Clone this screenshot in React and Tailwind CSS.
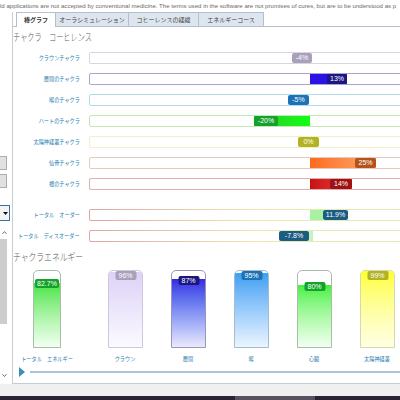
import React from "react";

const JP = { fontFamily: '"Noto Sans CJK JP", "Noto Sans", sans-serif' };

const rows = [
  { label: "クラウンチャクラ", border: "border-[#d8d4e4]", lab: { l: 202, w: 20, t: "-4%", bg: "bg-[#a9a1ba]" } },
  { label: "層間のチャクラ", border: "border-[#aaa2cf]", fill: { l: 220, w: 37, c: "bg-[#2c12e6]" }, lab: { l: 237, w: 20, t: "13%", bg: "bg-[#1c1680]" } },
  { label: "喉のチャクラ", border: "border-[#b0dbee]", lab: { l: 198, w: 21, t: "-5%", bg: "bg-[#1c72b6]" } },
  { label: "ハートのチャクラ", border: "border-[#c2e9b4]", fill: { l: 164, w: 56, c: "bg-gradient-to-r from-[#28c828] to-[#10ff10]" }, lab: { l: 164, w: 24, t: "-20%", bg: "bg-[#14a22a]" } },
  { label: "太陽神経叢チャクラ", border: "border-[#f0f0c4]", lab: { l: 208, w: 21, t: "0%", bg: "bg-[#b2b222]" } },
  { label: "仙骨チャクラ", border: "border-[#e8c8ba]", fill: { l: 220, w: 66, c: "bg-gradient-to-r from-[#ff6a18] to-[#f7a86a]" }, lab: { l: 265, w: 21, t: "25%", bg: "bg-[#b4541a]" } },
  { label: "根のチャクラ", border: "border-[#dab0b0]", fill: { l: 220, w: 42, c: "bg-gradient-to-r from-[#cc1010] to-[#e23a3a]" }, lab: { l: 240, w: 22, t: "14%", bg: "bg-[#a01212]" } },
];

const totals = [
  { label: "トータル　オーダー", fill: { l: 220, w: 13, c: "bg-[#a6f2a0]" }, lab: { l: 233, w: 25, t: "11.9%", bg: "bg-[#1a5c82]" } },
  { label: "トータル　ディスオーダー", fill: { l: 219, w: 4, c: "bg-[#c6f4c0]" }, lab: { l: 189, w: 30, t: "-7.8%", bg: "bg-[#1a5c82]" } },
];

function BarInner({ r }) {
  return (
    <>
      {r.fill && (
        <div className={"absolute top-0 bottom-0 " + r.fill.c} style={{ left: r.fill.l, width: r.fill.w }} />
      )}
      <div
        className={"absolute top-[0px] h-[10px] rounded-[2px] text-white text-[7px] leading-[10px] text-center " + r.lab.bg}
        style={{ left: r.lab.l, width: r.lab.w, fontFamily: '"Liberation Sans", sans-serif' }}
      >
        {r.lab.t}
      </div>
    </>
  );
}

function Row({ r, total }) {
  return (
    <div className="flex items-center h-[12px]">
      <div className="w-[67px] shrink-0 flex justify-end">
        <span className="inline-block origin-right scale-x-[0.86] text-[6px] leading-[8px] text-[#2e7fb2] whitespace-nowrap" style={JP}>
          {r.label}
        </span>
      </div>
      <div className="ml-[9px] w-[330px] shrink-0">
        {total ? (
          <div className="p-[1px] rounded-[2px] bg-gradient-to-r from-[#dca6a6] via-[#f0e6b0] to-[#dcefb4]">
            <div className="relative h-[10px] bg-white rounded-[1px] overflow-hidden">
              <BarInner r={r} />
            </div>
          </div>
        ) : (
          <div className={"relative h-[12px] border rounded-[2px] bg-white overflow-hidden " + r.border}>
            <BarInner r={r} />
          </div>
        )}
      </div>
    </div>
  );
}

const tubes = [
  { label: "トータル　エネルギー", w: "w-[28px]", pct: 82.7, t: "82.7%", border: "border-[#a8bca8]", fill: "bg-gradient-to-b from-[#3fe43f] to-[#f2fff2]", bg: "bg-[#12a428]" },
  { label: "クラウン", w: "w-[35px]", pct: 96, t: "96%", border: "border-[#cfc8dc]", fill: "bg-gradient-to-b from-[#ddd2f7] to-[#fbfaff]", bg: "bg-[#a9a1ba]" },
  { label: "層間", w: "w-[35px]", pct: 87, t: "87%", border: "border-[#9a94b8]", fill: "bg-gradient-to-b from-[#3a26e2] to-[#ece9fb]", bg: "bg-[#1c1680]" },
  { label: "喉", w: "w-[35px]", pct: 95, t: "95%", border: "border-[#a4bccc]", fill: "bg-gradient-to-b from-[#3c9ff2] to-[#eaf5ff]", bg: "bg-[#1c72b6]" },
  { label: "心臓", w: "w-[35px]", pct: 80, t: "80%", border: "border-[#a8bca8]", fill: "bg-gradient-to-b from-[#3ff03f] to-[#f2fff2]", bg: "bg-[#12a428]" },
  { label: "太陽神経叢", w: "w-[35px]", pct: 99, t: "99%", border: "border-[#d8d8b0]", fill: "bg-gradient-to-b from-[#ffff1c] to-[#ffffe4]", bg: "bg-[#b2b222]" },
];

function Tube({ t }) {
  const H = 78;
  const fillTop = H * (1 - t.pct / 100);
  const top = Math.max(0, fillTop - 5);
  return (
    <div className={"flex flex-col items-center shrink-0 " + t.w}>
      <div className={"relative w-full h-[78px] border rounded-t-[5px] bg-white overflow-hidden " + t.border}>
        <div className={"absolute left-0 right-0 bottom-0 " + t.fill} style={{ height: (t.pct / 100) * H }} />
        <div
          className={"absolute left-1/2 -translate-x-1/2 h-[9px] rounded-[2px] text-white text-[7px] leading-[9px] text-center " + t.bg}
          style={{ top, width: t.t.length > 3 ? 24 : 21, fontFamily: '"Liberation Sans", sans-serif' }}
        >
          {t.t}
        </div>
      </div>
      <div className="mt-[7px] h-[8px] flex justify-center">
        <span className="inline-block origin-center scale-x-[0.86] text-[6px] leading-[8px] text-[#2e7fb2] whitespace-nowrap" style={JP}>
          {t.label}
        </span>
      </div>
    </div>
  );
}

function Tabs() {
  const tabs = ["オーラシミュレーション", "コヒーレンスの経緯", "エネルギーコース"];
  const ws = ["w-[73px]", "w-[70px]", "w-[65px]"];
  return (
    <div className="flex items-end h-[15px] pl-[3px] border-b border-[#b4c0cc] shrink-0" style={JP}>
      <div className="w-[40px] h-[15px] bg-white border border-b-0 border-[#b4c0cc] text-[6px] leading-[13px] text-center text-[#303030] font-bold -mb-[1px] relative z-10">
        棒グラフ
      </div>
      {tabs.map((t, i) => (
        <div
          key={t}
          className={"h-[14px] bg-[#dde5ee] border-t border-r border-[#b4c0cc] text-[6px] leading-[13px] text-center text-[#404040] " + ws[i]}
        >
          {t}
        </div>
      ))}
    </div>
  );
}

function Sidebar() {
  return (
    <div className="w-[12px] shrink-0 flex flex-col bg-white">
      <div className="h-[144px]" />
      <div className="w-[7px] h-[14px] bg-[#e1e1e1] border border-l-0 border-[#adadad]" />
      <div className="mt-[4px] w-[7px] h-[14px] bg-[#e1e1e1] border border-l-0 border-[#adadad]" />
      <div className="mt-[17px] w-[10px] h-[16px] bg-[#f4f4f4] border border-l-0 border-[#3c6fa6] flex items-center justify-end pr-[1px]">
        <svg width="5" height="3" viewBox="0 0 5 3"><path d="M0 0 H5 L2.5 3 Z" fill="#111" /></svg>
      </div>
      <div className="mt-[8px] w-[8px] h-[6px] flex items-center justify-center">
        <svg width="5" height="3" viewBox="0 0 5 3"><path d="M0.5 2.8 L2.5 0.6 L4.5 2.8" stroke="#606060" strokeWidth="0.9" fill="none" /></svg>
      </div>
      <div className="mt-[4px] w-[7px] h-[85px] bg-[#cdcdcd]" />
      <div className="flex-1" />
      <div className="mb-[6px] w-[8px] h-[6px] flex items-center justify-center">
        <svg width="5" height="3" viewBox="0 0 5 3"><path d="M0.5 0.3 L2.5 2.5 L4.5 0.3" stroke="#606060" strokeWidth="0.9" fill="none" /></svg>
      </div>
    </div>
  );
}

export default function App() {
  return (
    <div className="w-[400px] h-[400px] overflow-hidden bg-white flex flex-col">
      <div
        className="h-[12px] shrink-0 whitespace-nowrap overflow-hidden text-[6.1px] leading-[12px] text-[#6a6a6a] bg-white"
        style={{ fontFamily: '"Liberation Sans", Arial, sans-serif' }}
      >
        ld applications are not accepted by conventional medicine. The terms used in the software are not promises of cures, but are to be understood as p
      </div>
      <div className="flex h-[372px] shrink-0">
        <Sidebar />
        <div className="flex-1 h-[372px] border-l border-b border-[#c4ccd4] bg-white flex flex-col overflow-hidden">
          <Tabs />
          <div className="mt-[3px] h-[14px] shrink-0 flex items-center">
            <span className="inline-block text-[10px] leading-[14px] text-[#5a5a5a] font-light origin-left scale-x-[0.72] whitespace-nowrap" style={JP}>
              チャクラ　コーヒレンス
            </span>
          </div>
          <div className="mt-[8px] flex flex-col gap-[9px] shrink-0">
            {rows.map((r) => (
              <Row key={r.label} r={r} />
            ))}
          </div>
          <div className="mt-[19px] flex flex-col gap-[9px] shrink-0">
            {totals.map((r) => (
              <Row key={r.label} r={r} total />
            ))}
          </div>
          <div className="mt-[8px] h-[14px] shrink-0 flex items-center">
            <span className="inline-block text-[10px] leading-[14px] text-[#5a5a5a] font-light origin-left scale-x-[0.78] whitespace-nowrap" style={JP}>
              チャクラエネルギー
            </span>
          </div>
          <div className="mt-[6px] flex pl-[20px] shrink-0">
            <Tube t={tubes[0]} />
            <div className="ml-[47px] flex gap-[28px]">
              {tubes.slice(1).map((t) => (
                <Tube key={t.label} t={t} />
              ))}
            </div>
          </div>
          <div className="mt-[4px] h-[10px] shrink-0 flex items-center pl-[6px]">
            <svg width="6" height="10" viewBox="0 0 6 10"><path d="M0 0 L6 5 L0 10 Z" fill="#3a8fb8" /></svg>
            <div className="ml-[5px] flex-1 h-[1.5px] bg-[#a9c5d2]" />
          </div>
        </div>
      </div>
      <div className="h-[12px] shrink-0 bg-[#f0f0f0]" />
      <div className="flex-1 bg-[#2c2434] flex">
        <div className="ml-[235px] w-[80px] bg-[#57525e]" />
      </div>
    </div>
  );
}
